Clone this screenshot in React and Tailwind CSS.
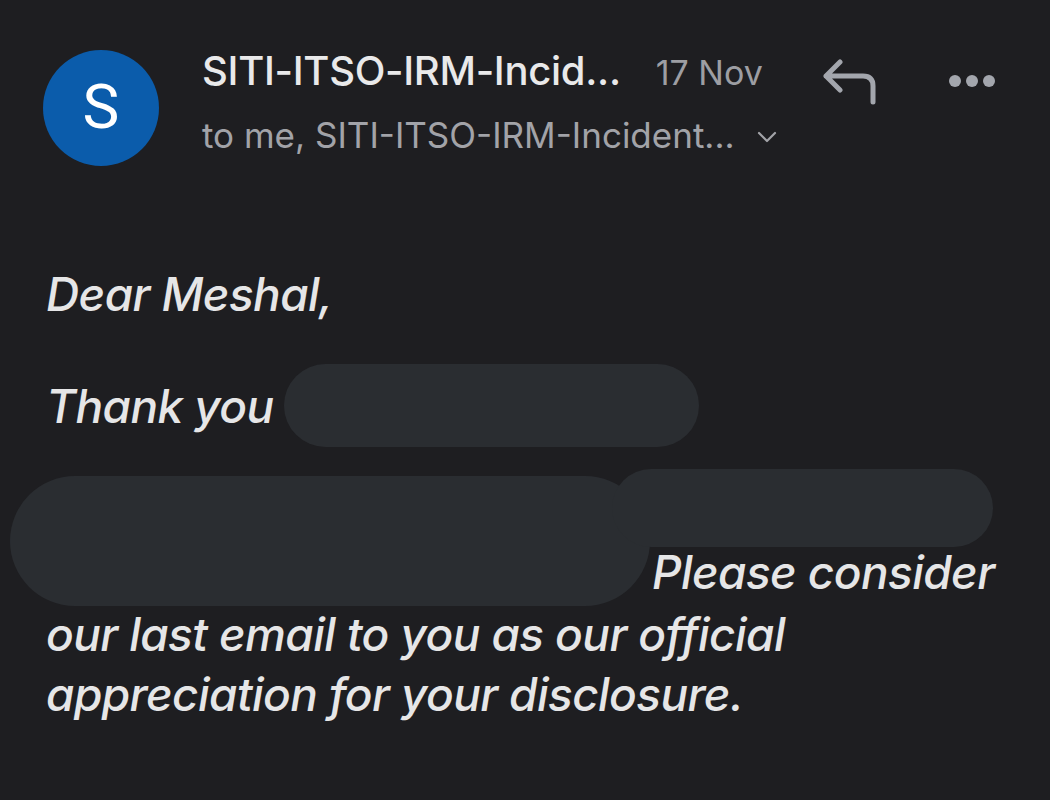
import { useState } from 'react'

function ReplyIcon() {
  return (
    <svg width="56" height="48" viewBox="0 0 56 48" fill="none">
      <path
        d="M17 3 L3 17 L17 31 M3 17 H40 Q50 17 50 27 V43"
        stroke="#a3a6ad"
        strokeWidth="5"
        strokeLinecap="round"
        strokeLinejoin="round"
      />
    </svg>
  )
}

function Redacted({ className }) {
  return <div aria-hidden="true" className={`shrink-0 rounded-full bg-[#2a2d31] ${className}`} />
}

export default function App() {
  const [expanded, setExpanded] = useState(false)

  return (
    <div className="h-[800px] w-[1050px] overflow-hidden bg-[#1e1e21] font-['Inter',sans-serif]">
      <header className="flex items-start pl-[43px] pt-[50px]">
        <div className="flex h-[116px] w-[116px] shrink-0 items-center justify-center rounded-full bg-[#0b5cab] pb-[2px] text-[62px] leading-none text-white font-['Roboto',sans-serif]">
          S
        </div>

        <div className="-mt-[9px] ml-[43px] flex min-w-0 flex-col">
          <div className="flex items-baseline">
            <span className="text-[40px] font-medium tracking-[-0.3px] text-[#e9e9ea]">
              SITI-ITSO-IRM-Incid...
            </span>
            <span className="ml-[35px] text-[34px] text-[#9d9ea3]">17 Nov</span>
          </div>
          <button
            onClick={() => setExpanded(!expanded)}
            className="mt-[8px] flex items-center text-[35px] text-[#a2a3a8]"
          >
            <span>to me, SITI-ITSO-IRM-Incident...</span>
            <svg className="ml-[22px] mt-[4px]" width="20" height="14" viewBox="0 0 20 14" fill="none">
              <path d="M2 3 L10 11 L18 3" stroke="#a2a3a8" strokeWidth="2.2" strokeLinecap="round" strokeLinejoin="round" />
            </svg>
          </button>
        </div>

        <div className="ml-[46px] mt-[9px] flex items-center">
          <ReplyIcon />
          <div className="ml-[70px] mt-[-4px] flex gap-[5px]">
            <span className="h-[12px] w-[12px] rounded-full bg-[#a3a6ad]" />
            <span className="h-[12px] w-[12px] rounded-full bg-[#a3a6ad]" />
            <span className="h-[12px] w-[12px] rounded-full bg-[#a3a6ad]" />
          </div>
        </div>
      </header>

      <main className="mt-[98px] text-[46px] font-medium italic leading-[60px] tracking-[-0.6px] text-[#e6e6e7]">
        <p className="pl-[46px]">Dear Meshal,</p>

        <div className="mt-[40px] flex items-center pl-[46px]">
          <span>Thank you</span>
          <Redacted className="ml-[10px] h-[83px] w-[415px]" />
        </div>

        <div className="mt-[22px] flex items-start pl-[10px]">
          <Redacted className="mt-[7px] h-[130px] w-[640px]" />
          <div className="-ml-[38px] flex flex-col">
            <Redacted className="h-[78px] w-[381px]" />
            <span className="ml-[40px] mt-[-5px] whitespace-nowrap">Please consider</span>
          </div>
        </div>

        <p className="mt-[-2px] pl-[46px]">our last email to you as our official</p>
        <p className="pl-[46px]">appreciation for your disclosure.</p>
      </main>
    </div>
  )
}
